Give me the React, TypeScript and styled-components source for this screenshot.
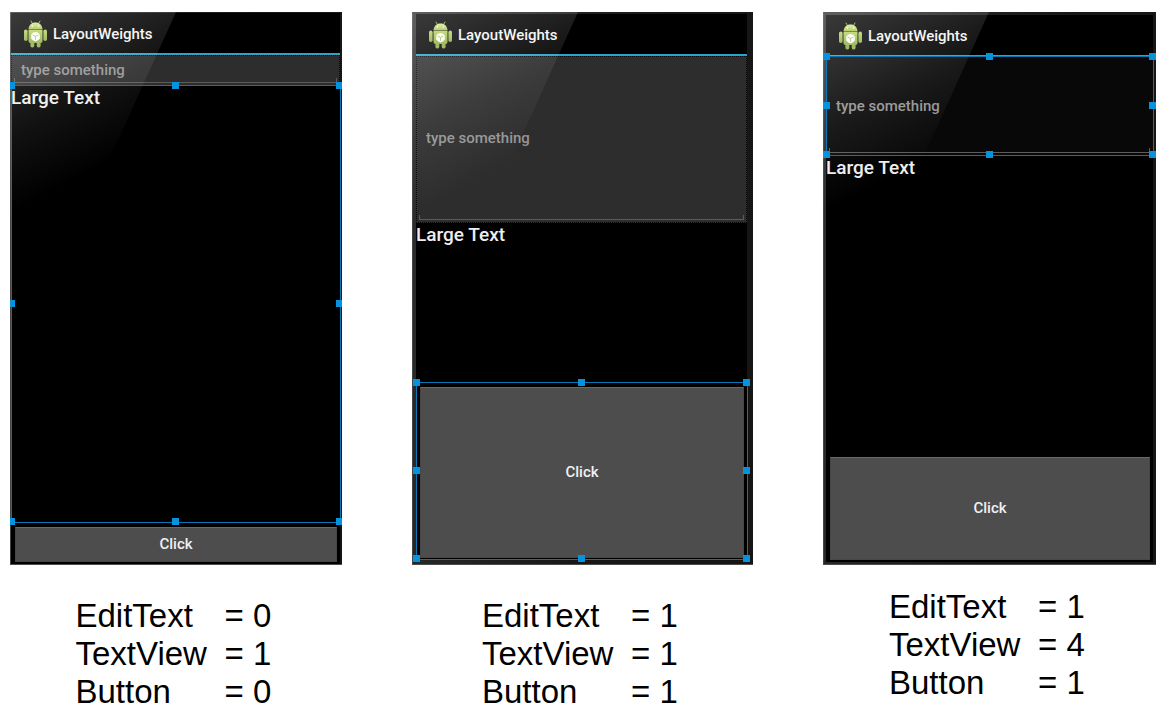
import React from "react";
import styled, { createGlobalStyle, css } from "styled-components";

const GlobalStyle = createGlobalStyle`
  * { box-sizing: border-box; }
  body { margin: 0; background: #fff; }
`;

const Page = styled.main`
  display: grid;
  grid-template-columns: 332fr 341fr 333fr;
  column-gap: 70px;
  padding: 12px 6px 0 10px;
`;

const Example = styled.section<{ $gap: number }>`
  display: flex;
  flex-direction: column;
  align-items: center;
  gap: ${(p) => p.$gap}px;
`;

const Phone = styled.div<{ $bezel: string }>`
  position: relative;
  display: flex;
  align-self: stretch;
  min-height: 553px;
  padding: ${(p) => p.$bezel};
  overflow: hidden;
  background: linear-gradient(100deg, #303030 0%, #262626 25%, #181716 60%, #161514 100%);
  box-shadow: inset 0 -1px #4c4c4a, inset 1px 0 #444;
  font-family: Roboto, "Liberation Sans", sans-serif;
`;

const Screen = styled.div`
  display: flex;
  flex: 1;
  flex-direction: column;
  min-width: 0;
  background: #000;
`;

const TitleBar = styled.header`
  display: flex;
  align-items: center;
  gap: 5px;
  height: 42px;
  padding: 2px 13px 0 12px;
  border-bottom: 2px solid #2ba3cb;
`;

const Title = styled.h2`
  margin: 0;
  color: #f4f4f4;
  font-size: 15px;
  font-weight: 500;
  line-height: 20px;
`;

const Slot = styled.div<{ $weight: number; $base: number }>`
  position: relative;
  display: flex;
  flex: ${(p) => p.$weight} 0 ${(p) => p.$base}px;
`;

const Field = styled.div<{ $selected: boolean }>`
  position: relative;
  display: flex;
  flex: 1;
  background: ${(p) => (p.$selected ? "#080808" : "#2d2d2d")};
  ${(p) =>
    !p.$selected &&
    css`
      outline: 1px dotted #050505;
      outline-offset: -1px;
    `}

  &::after {
    content: "";
    position: absolute;
    right: 3px;
    bottom: 3px;
    left: 3px;
    height: 4px;
    border: solid #5c5c5c;
    border-width: 0 1px 1px;
  }
`;

const TextInput = styled.input`
  flex: 1;
  min-width: 0;
  padding: 0 10px 2px;
  border: 0;
  outline: 0;
  background: none;
  color: #fff;
  font: 500 15px/20px Roboto, "Liberation Sans", sans-serif;

  &::placeholder { color: #959595; opacity: 1; }
`;

const LargeText = styled.p`
  margin: 0;
  color: #eee;
  font-size: 19px;
  font-weight: 500;
  line-height: 24px;
`;

const ClickButton = styled.button`
  flex: 1;
  margin: 4px 3px 2px 4px;
  padding: 0 0 1px;
  border: 1px solid #474747;
  border-top-color: #696969;
  background: #4d4d4d;
  color: #f0f0f0;
  font: 500 15px/20px Roboto, "Liberation Sans", sans-serif;
`;

const Outline = styled.div`
  position: absolute;
  z-index: 2;
  inset: -1px -1px 0 0;
  border: 1px solid #0876b4;
  pointer-events: none;
`;

const Handle = styled.span<{ $x: number; $y: number }>`
  position: absolute;
  left: ${(p) => p.$x}%;
  top: ${(p) => p.$y}%;
  width: 7px;
  height: 7px;
  margin: -4px 0 0 -4px;
  background: #0593df;
`;

const Gloss = styled.div`
  position: absolute;
  z-index: 1;
  inset: 0;
  background: linear-gradient(153deg, rgba(255, 255, 255, 0.23), rgba(255, 255, 255, 0.07) 110px, transparent 180px);
  clip-path: polygon(0 0, 166px 0, 0 367px);
  pointer-events: none;
`;

const Weights = styled.dl`
  display: grid;
  grid-template-columns: 149px 52px;
  margin: 0;
  color: #000;
  font: 400 33px/38px "Liberation Sans", Arial, sans-serif;

  dt, dd { margin: 0; white-space: nowrap; }
`;

const HANDLES = [
  [0, 0], [50, 0], [100, 0],
  [0, 50], [100, 50],
  [0, 100], [50, 100], [100, 100],
];

function Selection() {
  return (
    <Outline>
      {HANDLES.map(([x, y]) => (
        <Handle key={`${x}-${y}`} $x={x} $y={y} />
      ))}
    </Outline>
  );
}

function AndroidIcon() {
  return (
    <svg width="25" height="28" viewBox="0 0 25 28" aria-hidden="true">
      <defs>
        <linearGradient id="droid" x1="0" y1="0" x2="0" y2="1">
          <stop offset="0" stopColor="#b9d464" />
          <stop offset="1" stopColor="#8dab42" />
        </linearGradient>
        <linearGradient id="droid-head" x1="0" y1="0" x2="0" y2="1">
          <stop offset="0" stopColor="#dcec9c" />
          <stop offset="1" stopColor="#a6c44c" />
        </linearGradient>
      </defs>
      <path d="M8 1l1.500 2.500M17 1l-1.500 2.500" stroke="#9ab552" strokeWidth="1" strokeLinecap="round" />
      <path d="M5.500 9C5.800 5 8.600 2.400 12.500 2.400s6.700 2.600 7 6.600z" fill="url(#droid-head)" />
      <circle cx="9.400" cy="6" r=".8" fill="#fbfdf0" />
      <circle cx="15.600" cy="6" r=".8" fill="#fbfdf0" />
      <rect x="1" y="9.500" width="3.600" height="11.500" rx="1.800" fill="url(#droid)" />
      <rect x="20.400" y="9.500" width="3.600" height="11.500" rx="1.800" fill="url(#droid)" />
      <rect x="7.400" y="18" width="3.900" height="9.500" rx="1.700" fill="#8dab42" />
      <rect x="13.700" y="18" width="3.900" height="9.500" rx="1.700" fill="#8dab42" />
      <path d="M5.500 9.600h14V21a2 2 0 0 1-2 2h-10a2 2 0 0 1-2-2z" fill="url(#droid)" />
      <path d="M12.500 12l2.800.8 1.500 2v3.800l-1.700 1.700-2.600 1.100-2.600-1.100-1.700-1.700v-3.800l1.500-2z" fill="#fbfcf5" />
      <path d="M9.600 15l2.900 1.400 2.900-1.400M12.500 16.400v3.400" fill="none" stroke="#a5b977" strokeWidth=".9" />
    </svg>
  );
}

type Part = "edit" | "text" | "button";

interface Sample {
  id: string;
  weights: [number, number, number];
  selected: Part;
  bezel: string;
  gap: number;
}

const SAMPLES: Sample[] = [
  { id: "first", weights: [0, 1, 0], selected: "text", bezel: "1px 2px 1px 1px", gap: 32 },
  { id: "second", weights: [1, 1, 1], selected: "button", bezel: "2px 6px 5px 4px", gap: 32 },
  { id: "third", weights: [1, 4, 1], selected: "edit", bezel: "3px 3px 3px 3px", gap: 23 },
];

export default function App() {
  return (
    <>
      <GlobalStyle />
      <Page>
        {SAMPLES.map(({ id, weights, selected, bezel, gap }) => (
          <Example key={id} $gap={gap}>
            <Phone $bezel={bezel}>
              <Screen>
                <TitleBar>
                  <AndroidIcon />
                  <Title>LayoutWeights</Title>
                </TitleBar>
                <Slot $weight={weights[0]} $base={31}>
                  <Field $selected={selected === "edit"}>
                    <TextInput id={`${id}-input`} aria-label="type something" placeholder="type something" />
                  </Field>
                  {selected === "edit" && <Selection />}
                </Slot>
                <Slot $weight={weights[1]} $base={25}>
                  <LargeText>Large Text</LargeText>
                  {selected === "text" && <Selection />}
                </Slot>
                <Slot $weight={weights[2]} $base={41}>
                  <ClickButton type="button">Click</ClickButton>
                  {selected === "button" && <Selection />}
                </Slot>
              </Screen>
              <Gloss />
            </Phone>
            <Weights>
              <dt>EditText</dt>
              <dd>= {weights[0]}</dd>
              <dt>TextView</dt>
              <dd>= {weights[1]}</dd>
              <dt>Button</dt>
              <dd>= {weights[2]}</dd>
            </Weights>
          </Example>
        ))}
      </Page>
    </>
  );
}
